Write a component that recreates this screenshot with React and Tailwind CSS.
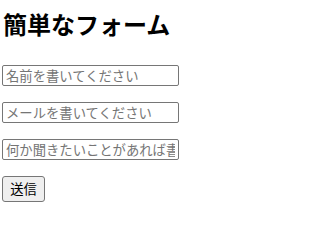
export default function App() {
  return (
    <div className="min-h-screen bg-white px-[2px] font-['Noto_Sans_CJK_JP',sans-serif] text-black">
      <h1 className="mt-[8px] text-[24px] font-bold leading-[32px] pl-[1px]">簡単なフォーム</h1>
      <form className="mt-[25px] flex flex-col items-start gap-[16px]" onSubmit={(e) => e.preventDefault()}>
        <input
          type="text"
          placeholder="名前を書いてください"
          className="h-[21px] w-[177px] rounded-[2px] border border-[#767676] px-[3px] text-[13.33px] leading-none placeholder:text-[#757575]"
        />
        <input
          type="email"
          placeholder="メールを書いてください"
          className="h-[21px] w-[177px] rounded-[2px] border border-[#767676] px-[3px] text-[13.33px] leading-none placeholder:text-[#757575]"
        />
        <input
          type="text"
          placeholder="何か聞きたいことがあれば書いてください"
          className="h-[21px] w-[177px] rounded-[2px] border border-[#767676] px-[3px] text-[13.33px] leading-none placeholder:text-[#757575]"
        />
        <button
          type="submit"
          className="h-[26px] w-[43px] rounded-[3px] border border-[#767676] bg-[#efefef] text-[13.33px] leading-none"
        >
          送信
        </button>
      </form>
    </div>
  );
}
